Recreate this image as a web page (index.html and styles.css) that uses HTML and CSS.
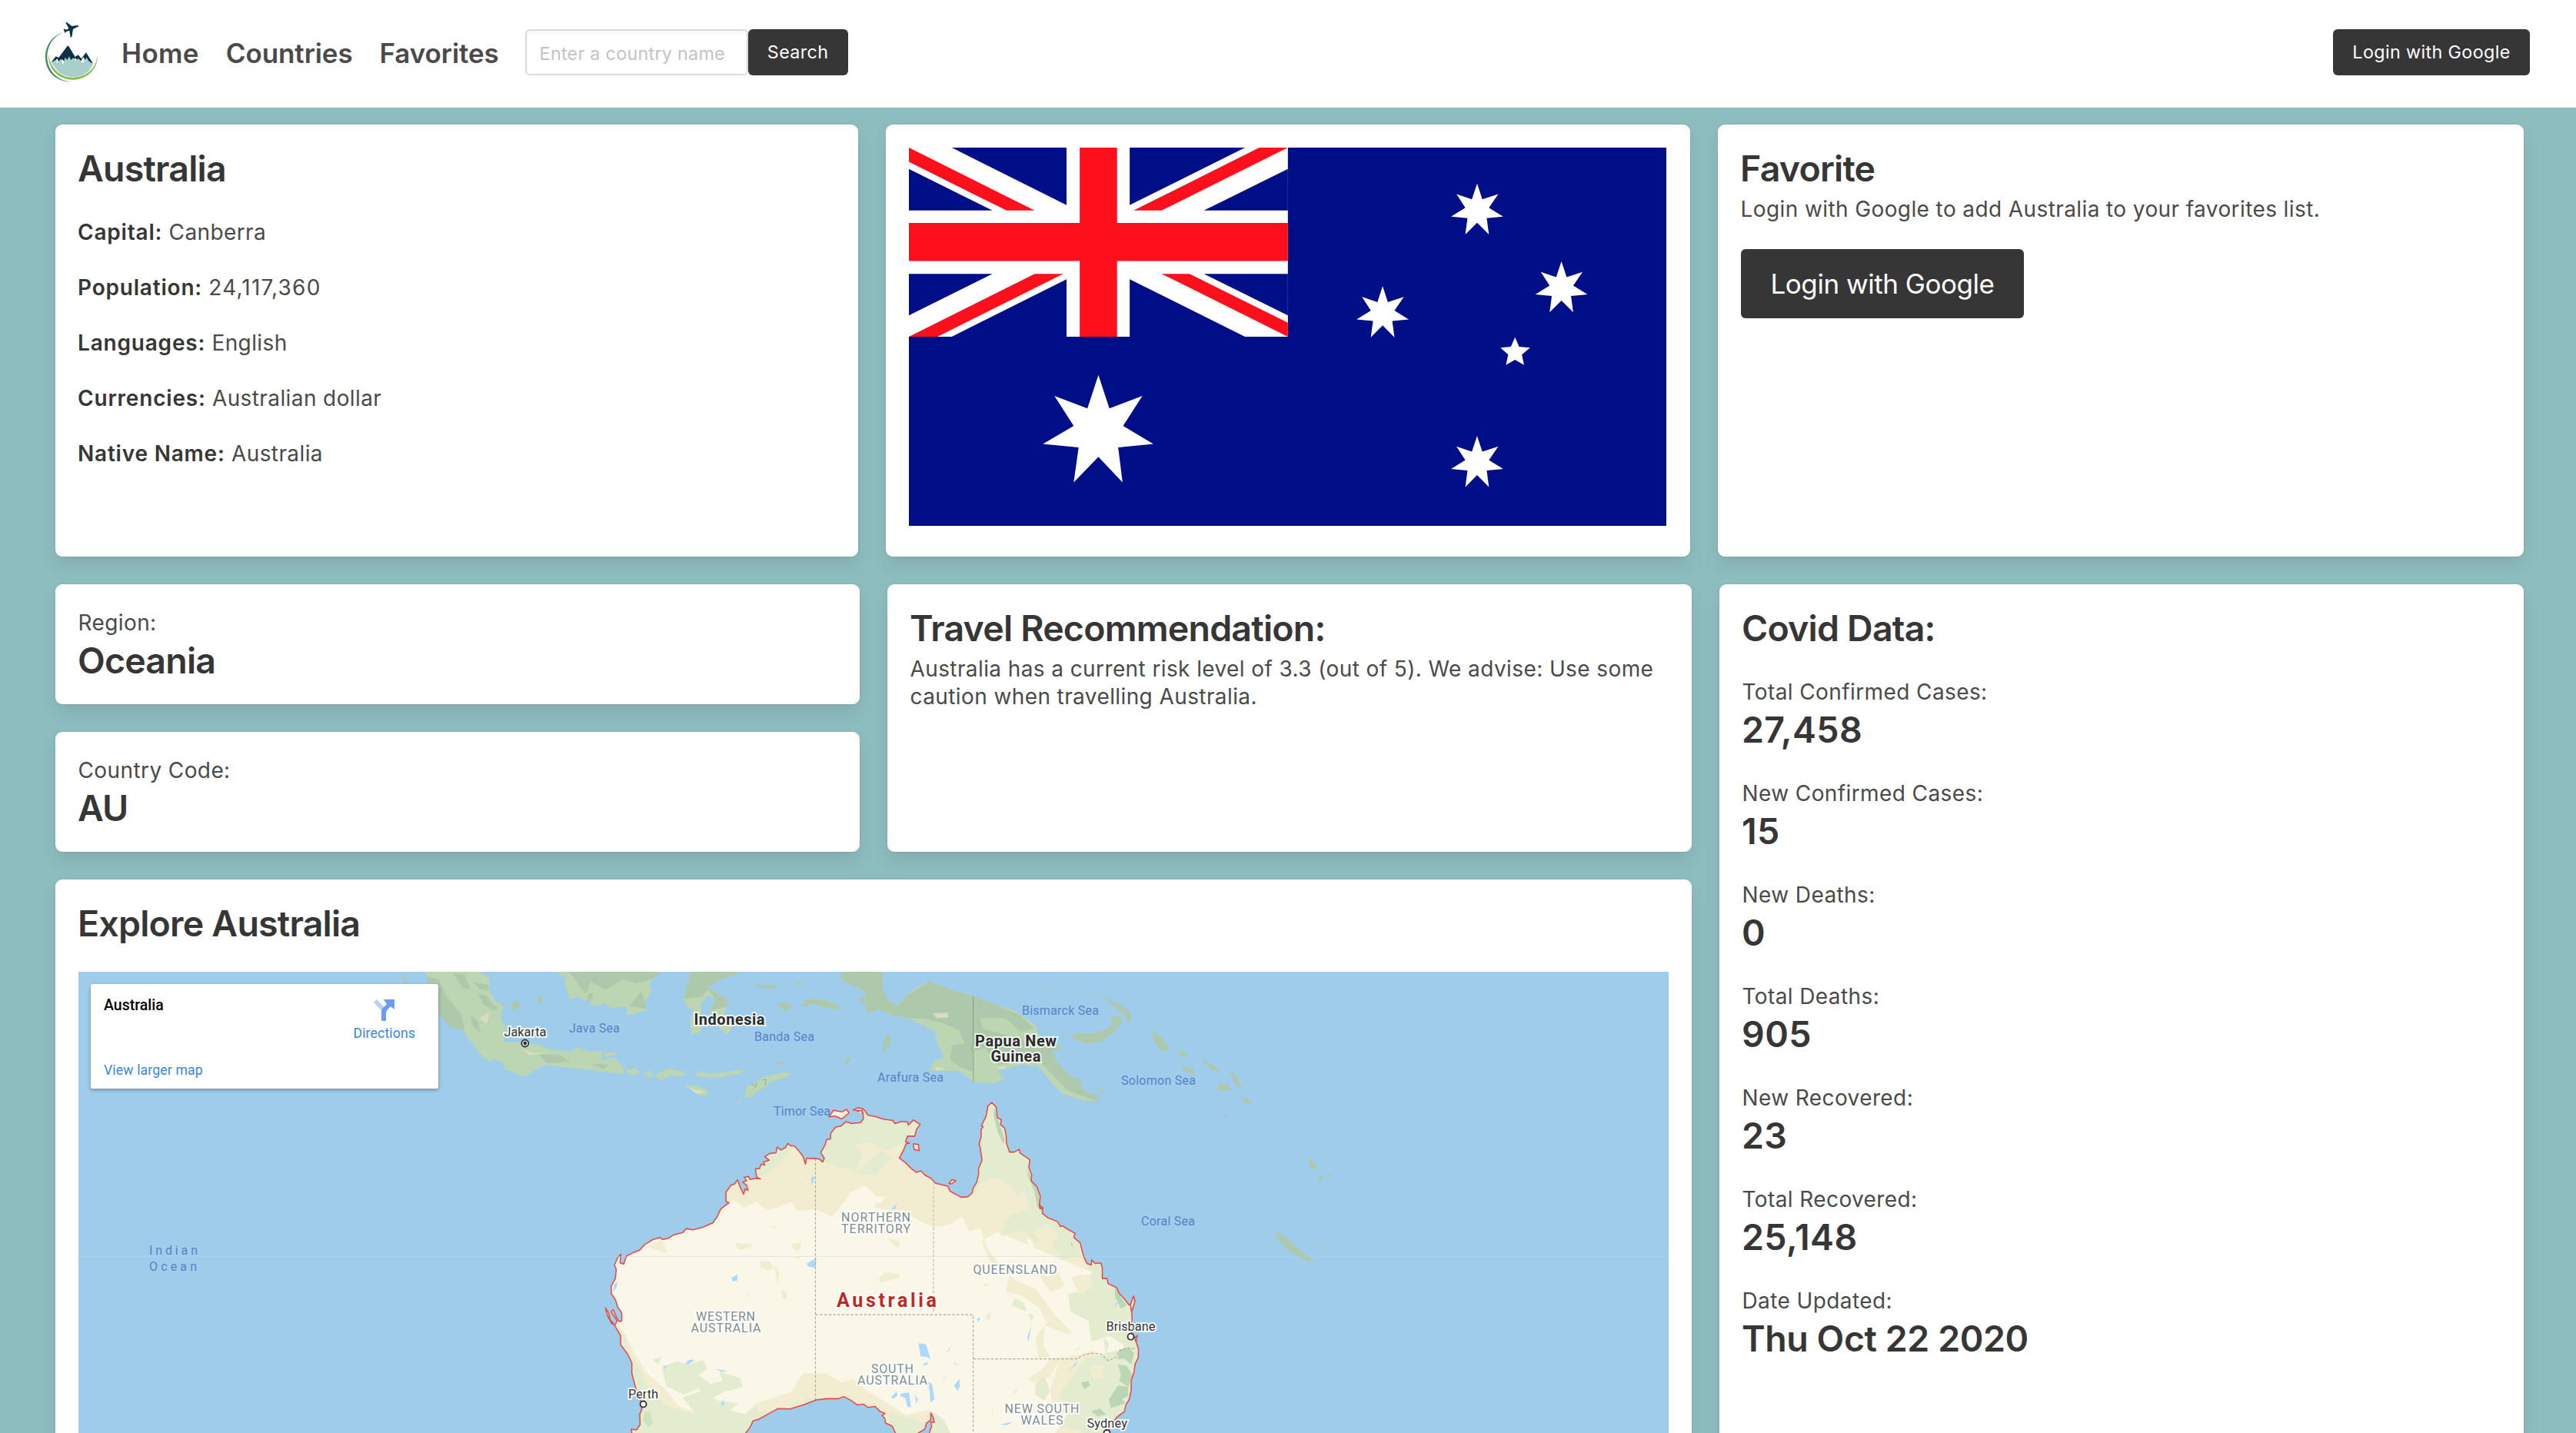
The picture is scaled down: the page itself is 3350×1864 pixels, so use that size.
FILE: index.html
```html
<!DOCTYPE html>
<html lang="en">
<head>
<meta charset="utf-8">
<title>Australia</title>
<link rel="stylesheet" href="styles.css">
</head>
<body>
<header class="navbar">
  <svg class="logo" viewBox="0 0 330 330">
    <path d="M80 213L98 190l11 5 34-46 5 1 25 42 12-8 12 15 19-24 27 43-30-12-8-14-14 24-18-20-12 18-14-16-10 18-16-16-8 20-10-22-12 16z" fill="#0a3145"/>
    <path d="M80 213l18-9 6 12 12-16 10 22 8-28 8 10 8-14 6 14 10-8 8 10 12-8 18 18 14-22 8 14 17 13c-14 32-42 50-78 50s-66-22-85-58z" fill="#a9cfcd"/>
    <path d="M69 180c3 44 38 93 96 93 56 0 92-40 96-92 2 56-38 100-96 100-60 0-100-48-96-101z" fill="#7fbd45"/>
    <path d="M123 98C82 110 56 150 57 196c2 54 40 92 100 94-54-6-90-42-93-94-2-44 22-82 59-98z" fill="#3c8d5a"/>
    <path d="M136 58l5-1 19 15 21-3c6-1 8 3 2 6l-18 8-5 31-5 2-4-27-12 4-6 6-2-7-3-9 5 0 6 3 9-5z" fill="#0a3145"/>
  </svg>
  <nav class="links"><a class="link-home">Home</a><a>Countries</a><a>Favorites</a></nav>
  <form class="search"><input class="input" type="text" placeholder="Enter a country name"><button class="button" type="button">Search</button></form>
  <button class="button login" type="button">Login with Google</button>
</header>

<main class="page">
  <section class="row row-top">
    <article class="box">
      <h2 class="title">Australia</h2>
      <div class="facts">
        <p><strong>Capital:</strong> Canberra</p>
        <p><strong>Population:</strong> <span class="digits">24,117,360</span></p>
        <p><strong>Languages:</strong> English</p>
        <p><strong>Currencies:</strong> Australian dollar</p>
        <p><strong>Native Name:</strong> Australia</p>
      </div>
    </article>
    <article class="box">
      <svg class="flag" viewBox="73 132 1379 1244" preserveAspectRatio="none">
        <defs>
          <path id="star7" d="M1107.500 250L1117 302 1146 285 1129 330 1155 359 1125 364 1129 418 1107.500 379 1086 418 1090 364 1060 359 1086 330 1070 285 1098 302z"/>
        </defs>
        <path d="M73 132h1379v1244H73z" fill="#000f88"/>
        <path d="M73 132h690v622H73z" fill="#fff"/>
        <path d="M151 132H360V321zM475 132H685L475 321zM73 202L225 339H73zM763 202V339H610zM73 547H225L73 684zM610 547H763V684zM360 565V754H151zM475 565L685 754H475z" fill="#000f88"/>
        <path d="M73 380H384V132H452V380H763V505H452V754H384V505H73zM73 132L302 339H251L73 179zM711 132H763L533 339H482zM302 547H354L125 754H73zM533 547H584L763 708V754z" fill="#fd101c"/>
        <g fill="#fff">
          <path d="M418 880L438 990 498 949 463 1047 518 1107 454 1118 462 1233 418 1149 373 1233 382 1118 317 1107 373 1047 338 949 398 990z"/>
          <use href="#star7"/>
          <use href="#star7" x="153.500" y="256"/>
          <use href="#star7" x="-172" y="338"/>
          <use href="#star7" y="830"/>
          <path d="M1176.500 756L1184 787 1204 790 1189 813 1193 847 1176.500 830 1160 847 1164 813 1150 790 1169 787z"/>
        </g>
      </svg>
    </article>
    <article class="box">
      <h2 class="title">Favorite</h2>
      <p class="subtitle">Login with Google to add Australia to your favorites list.</p>
      <button class="button large" type="button">Login with Google</button>
    </article>
  </section>

  <section class="row row-main">
    <div class="left">
      <div class="pair">
        <div class="stack">
          <article class="box"><p class="label">Region:</p><p class="title">Oceania</p></article>
          <article class="box"><p class="label">Country Code:</p><p class="title">AU</p></article>
        </div>
        <article class="box">
          <h2 class="title">Travel Recommendation:</h2>
          <p class="subtitle">Australia has a current risk level of 3.3 (out of 5). We advise: Use some caution when travelling Australia.</p>
        </article>
      </div>
      <article class="box explore">
        <h2 class="title">Explore Australia</h2>
        <div class="map">
          <svg class="map-canvas" viewBox="102 1264 2068 600">
            <defs>
              <path id="land" d="M318 1568L316 1555 334 1558 346 1540 345 1505 352 1490 348 1462 330 1415 318 1370 318 1335 303 1305 280 1275 280 1245 258 1208 243 1190 240 1170 228 1152 236 1180 250 1205 262 1208 268 1195 248 1165 255 1158 264 1180 275 1198 284 1195 283 1168 270 1150 262 1125 248 1105 248 1080 262 1055 265 1025 259 1010 270 985 281 974 278 1003 290 1007 300 980 320 970 345 960 362 942 390 925 415 919 422 925 440 922 460 910 490 903 503 889 525 893 560 884 593 870 608 850 620 824 648 803 638 798 638 768 655 745 668 740 677 727 685 748 698 775 703 757 713 762 708 745 695 735 708 730 700 718 715 716 720 726 738 722 755 724 742 718 738 690 752 690 757 675 770 678 765 668 785 662 770 650 785 640 808 637 812 618 825 628 840 620 848 606 858 614 870 614 890 636 900 650 908 675 912 655 940 656 955 658 967 668 972 655 960 637 975 610 980 593 993 592 994 573 1010 552 1030 548 1045 534 1065 540 1095 537 1105 525 1103 503 1088 497 1070 495 1085 488 1102 490 1112 500 1120 512 1150 518 1170 525 1205 530 1212 540 1235 533 1255 535 1258 545 1275 528 1298 543 1285 560 1280 582 1255 582 1248 600 1262 605 1250 607 1240 632 1227 655 1248 670 1268 690 1285 702 1300 697 1315 712 1335 722 1350 738 1392 748 1400 765 1437 785 1460 783 1475 770 1478 755 1490 735 1497 705 1496 690 1508 662 1502 620 1498 608 1505 585 1505 560 1512 550 1506 548 1522 515 1528 482 1541 470 1556 485 1560 520 1574 528 1571 543 1585 555 1590 580 1591 605 1602 635 1617 635 1635 626 1637 638 1659 652 1671 661 1667 685 1677 712 1675 730 1695 750 1706 782 1703 812 1715 820 1713 838 1732 853 1765 866 1774 882 1782 880 1797 890 1825 905 1820 918 1842 937 1849 965 1855 985 1865 1005 1879 1010 1881 993 1892 1005 1912 1003 1917 1020 1917 1055 1933 1055 1937 1072 1965 1085 1975 1105 1990 1120 2007 1142 2014 1138 2023 1113 2028 1130 2017 1165 2018 1190 2014 1230 2027 1252 2036 1244 2032 1265 2040 1290 2039 1318 2028 1340 2025 1365 2015 1395 2015 1425 2009 1455 1997 1475 1992 1497 1967 1515 1947 1540 1937 1568 1936 1590 1329 1590 1329 1568 1337 1545 1334 1532 1346 1532 1343 1518 1334 1501 1334 1525 1319 1536 1314 1555 1292 1568 1285 1580 1225 1580 1214 1568 1203 1545 1180 1535 1178 1520 1168 1510 1178 1503 1160 1495 1145 1480 1120 1483 1105 1472 1085 1475 1060 1458 1038 1447 1020 1454 980 1454 945 1458 900 1475 855 1488 815 1487 790 1500 750 1522 730 1528 718 1552 705 1568 705 1590 318 1590z"/>
              <clipPath id="coast"><use href="#land"/></clipPath>
            </defs>
            <path d="M102 1264h2068v600H102z" fill="#a0cceb"/>
            <g transform="translate(700 1250) scale(.38265 .39158)">
              <!-- Indonesian and Melanesian islands -->
              <g fill="#bdd6b2">
                <path d="M-390 30L-365 70-355 105-320 160-295 200-260 225-235 260-195 310-160 340-155 300-120 330-115 260-110 220-128 190-118 150-150 130-168 90-165 60-205 30z"/>
                <path d="M65 36L80 55 95 45 90 75 108 128 130 120 180 135 178 152 225 142 250 158 300 150 303 180 370 165 362 140 385 95 378 70 415 36z"/>
                <path d="M515 36L505 90 492 125 508 155 528 160 517 200 520 245 555 235 553 140 575 115 600 125 585 165 610 215 640 245 665 215 630 190 645 130 600 100 570 90 620 60 690 36z"/>
                <path d="M-150 270L-165 320-120 340-110 360-50 385 20 345 140 358 290 376 290 350 255 320 215 330 215 300 165 300 135 285 110 300 40 295 0 278-60 270z"/>
                <path d="M220 305l45-2 5 6-45 10zM298 360l30-2 20 10-20 14-25-10zM360 375l20-12 10 8-8 20zM397 380l20-12 25-10 55 10v15l-45-2-40 15zM532 376l20-10 30 8 50-4 50-8 15 2-10 10-70 12-30 2-50-6zM498 413l40 2 30 10 10 20-25 2-50-28zM700 455l8-35 60-35 70-15 25 2-15 12-50 15-45 30-25 20zM672 476l18-18-4 14z"/>
                <path d="M1022 50L1050 36H1168L1172 95 1190 130 1220 150 1250 115 1280 90 1305 80 1332 67 1400 95 1478 115 1560 148 1610 160 1650 185 1690 215 1700 245 1770 280 1780 290 1745 300 1765 335 1800 375 1850 400 1840 420 1900 450 1903 468 1850 462 1780 440 1745 405 1700 350 1640 345 1560 365 1585 390 1550 408 1478 400 1430 365 1330 365 1345 330 1380 322 1355 270 1350 235 1300 210 1255 190 1200 180 1160 160 1120 175 1110 145 1085 125 1120 120 1100 95 1040 70z"/>
              </g>
              <g fill="#adc8aa">
                <path d="M-380 50l40 10 30 60 50 60 10 50-50-10-60-70zM-290 40l40 5 20 50-30-8zM-220 70l50 10 0 20-30-8zM-230 180l25 20 10 40-28-25zM105 36L160 110 180 70 230 95 290 60 330 75 390 60 415 36zM170 110l15-5-5 25-15 5zM310 150l40-50 20 60zM515 36L505 90 492 125 560 118 575 95 600 125 585 165 645 150 640 125 575 90 620 60 690 36zM0 310l70 0 40 25-80 5zM180 340l60 5-20 15z"/>
                <path d="M1022 50L1050 36H1168L1172 95 1190 130 1220 150 1250 115 1332 67 1400 95 1478 115 1560 148 1640 180 1685 225 1640 235 1590 190 1500 190 1510 225 1640 260 1690 290 1760 275 1780 290 1745 300 1765 335 1800 375 1850 400 1840 420 1900 450 1903 468 1800 430 1740 370 1700 330 1560 345 1520 290 1478 300 1478 370 1430 350 1400 330 1405 280 1450 275 1430 230 1370 205 1300 190 1255 190 1200 180 1160 160 1120 175 1110 145 1085 125 1120 120 1100 95 1040 70z"/>
                <path d="M738 78l70 3-3 12-55-6zM875 65l25 3-5 8-20-2zM810 148l30-12 25 14-25 16zM892 145l25-20 60 5 40 15 10 18-45-8-55-12-20 8zM1170 295l5-35 20-18 2 30-18 25zM1040 345l5-18 18-12-8 22zM800 342l35-8 8 5-35 8zM0 115l15 5-5 20-12-2zM-205 110l30 5 20 30 20 10-15 10-35-20zM-95 140l25-8 10 20-25 12zM-465 36l10 18 20 40 5 30-25-40z"/>
                <path d="M1808 245l35-6 40 2 50-15 18-18-5-22 35-2 3 25-20 15-10 15-45 30-40 6-45-12zM1910 115l45 20 50 28 12 25-10 20-10-25-50-40zM2085 230l30 20 25 30-2 20-25-5-20-30zM2165 292l30 10 15 20-20-4zM2190 350l30 5 15 28-20-10-25-10zM2255 330l40 15 25 25-30-8zM2310 410l30-2 20 20-28 5-25-5zM2350 368l20 10 25 45-25-12zM2385 452l30 8 12 15-25-4zM2325 508l22 10-15 0zM1890 415l20 10 20 20-20-8zM1730 88l28 2-20 4zM1880 107l15 3 0 6zM2618 650l25 25 2 15-20 0zM2650 710l20 12-14 12zM2690 690l2 30-8 0zM2505 902l20 5 60 50 50 38-15 5-60-30-45-40zM2640 925l15 15-12 0zM2725 830l10 8-8 2zM2740 863l5 8zM2675 958l10 6zM2580 472l14-3z"/>
              </g>
              <g fill="#d5debf"><path d="M1340 175l50-3 5 15-40 3zM1350 352l35 5-30 8zM1555 355l30-8 0 14zM-60 290l40 15 60 0-70 8zM-200 190l35-20-10 40zM510 420l60 15-30 8z"/></g>
              <path d="M1478 115V275L1472 292 1479 302V402" fill="none" stroke="#8b9b8b" stroke-width="2.500"/>
              <path d="M723 406l15 12 5-14M760 395l14-2-4 20" fill="none" stroke="#8b9b8b" stroke-width="2"/>
              <!-- Australia -->
              <use href="#land" fill="#faf6e8"/>
              <g clip-path="url(#coast)">
                <path d="M620 850L660 790 700 820 740 800 780 830 860 800 880 830 940 825 1000 850 1040 800 1060 770 1110 745 1160 790 1140 820 1240 835 1290 860 1340 885 1400 875 1440 850 1465 900 1500 885 1530 960 1560 1000 1620 1060 1690 1090 1760 1180 1830 1250 1840 1290 1780 1310 1700 1320 1690 1250 1730 1200 1700 1150 1640 1110 1590 1100 1600 1050 1540 1010 1507 930 1560 900 2040 1100V460H620z" fill="#f2ecd0"/>
                <path d="M740 730L800 690 850 640 870 610 840 590 720 640zM975 670L1080 700 1100 640 1070 610 1130 600 1180 630 1230 610 1260 580 1310 520 1000 470 950 640zM1085 700l80-70 40 20-60 60-60 0zM1350 735l120 50 60-60 40 0 30 60 50-20 20 60-70 20-30 70 80-20 40 40 50 0 40 60 60-20 40 60-20 60-60 10 10 60 60 30 10 70 60-20 50 30-20 70 60 70 0 60 40 40H2060L2040 460H1500L1480 760z" fill="#e3eccf"/>
                <path d="M1500 740l60-20 50 30 30 70-60 10-40 80-80-60zM1680 900l50-30 40 40-40 50zM1700 1040l60-20 30 60-50 20zM1810 1050l60-10 20 40-50 30zM1840 950l30 10-20 30z" fill="#f2ecd0"/>
                <path d="M270 1200L300 1250 330 1310 370 1370 430 1420 480 1480 560 1510 700 1510 740 1470 860 1430 900 1370 980 1370 1030 1400 1070 1390 1120 1430 1190 1470 1250 1510 1330 1490 1370 1568H300L240 1220z" fill="#f2ecd0"/>
                <path d="M280 1225l20 30 5 40 40 60 20 50 50 50 40 60 60 53H300L310 1320zM700 1568l30-60 80-20 80-20 100-15-70 0-90 30-70 25-20 60zM1190 1500l60 15 60 20 30-40 40 30 20 43H1200z" fill="#e3eccf"/>
                <path d="M420 1470L500 1500 560 1510 640 1490 700 1505 740 1480 760 1520 700 1590H400z" fill="#e3eccf"/>
                <path d="M420 1350l50-20 40 10 50-15 15 30-30 20 40 30 40-10-10-30 70 20 10 30-60 15-60 30-30-40-50 20-60-30zM490 1450l60-20 60 30 70 10-60 50-80-10zM388 1325l30-10-10 25z" fill="#e3eccf"/>
                <path d="M1770 1330L1740 1380 1680 1400 1665 1390 1720 1350 1740 1320 1830 1310 1880 1295 1930 1320 2060 1300V1590H1740L1800 1510 1750 1480 1740 1430z" fill="#f2ecd0"/>
                <path d="M1800 1400l60-80 80-20 100-20V1590h-130L1780 1540 1810 1480 1770 1440zM1690 1400l30-20 20 50-20 30-30-20zM1620 1120l30 15 10 30-50-20zM1920 1250l20 20-10 40zM1665 1170l20 10-10 15z" fill="#e3eccf"/>
                <path d="M1840 1400l30-5-15 20zM1870 1350l50-10 0 40-30 10z" fill="#f2ecd0"/>
                <g fill="#b9d7b5">
                  <path d="M1550 490l14 40 10 30 10 30-2 20-20-40-15-60zM1660 690l16 30 20 40 12 50 10 30-22-25-10-50-22-50zM1975 1290l35-5 15 20-10 35-25-20-20 5zM1970 1340l30 5 20 30-15 40-30-20 5-25zM1940 1455l30-45 35 5 0 30-20 10 10 15-50 15zM1880 1495l30-8 20 20-30 5zM1845 1400l25-5 5 15-20 12zM1960 1085l20 30 20 30-20 10-20-40zM1812 930l6 20-8-5z"/>
                  <path d="M360 1500l20-5 10 40-15 18-18-30z" fill="#cfe3c0"/>
                </g>
                <g fill="#f2ecd0">
                  <path d="M370 950l50-25 20 45-30-8zM668 938l60 2-5 12-40 8zM752 1000l30-5 20 25-20 8-25-10zM805 1010l12 20 0 50-10-30zM825 1090l20 10 0 25-15-5zM860 940l35-5-10 30-20-10zM1155 1060l20-25 55 3-5 15-60 15zM1190 920l35 10 5 25-20-10zM780 880l35 3-10 6zM1510 1075l25-5-10 12zM1525 1175l15-8-5 25-15 0zM1540 1495l6-8-2 30zM1740 1385l10-5-2 12zM1610 1435l20-18-5 20zM1375 1385l15-5-10 15zM875 985l15-5-5 12zM705 1105l10 0-4 18z"/>
                  <path d="M1660 920l15 60 15 0-10-50z" fill="#faf6e8"/>
                  <path d="M1720 1210l80 30 40-10 10 40-50 45-60 0-25-40z" fill="#faf6e8"/>
                  <path d="M1060 770l50-25 10 30 60 10-20 20-30-10-50 50-30-20 40-30zM700 820l40-20 20 20 40 10-60 8z" fill="#faf6e8"/>
                </g>
                <g fill="#aadbff">
                  <path d="M912 1005l33-18-2 32-25-4zM657 1052l20-10 0 20-18 2zM928 720l12-6-5 22-8 2zM1200 825l18-20-5 20zM253 1100l5-25 12-12-4 22zM497 1340l15-15 20 0-20 14zM1292 1270l25 3 17 50-12-8-23-2zM1305 1340l22-8-8 12zM1413 1410l18-22 2 25-8 15zM1320 1395l18 10 9 50-14 12-3-40zM1230 1438l30-5 7 50-12-2-8-30-15-5zM1198 1450l20-20 3 12-12 12zM1280 1440l10 15-5 18zM1408 1330l17 12-7-1zM1385 1305l20-30-8 18zM1490 1188l14-3-9 14zM620 1475l10-20 2 18zM425 1345l15 0-10 12zM603 1355l40 8-20 2zM1570 1540l44-10-20 12zM1662 1250l14-40-10 55zM1800 1365l35-40-10 18zM1530 545l20 2zM470 930l8 18zM670 985l8 8zM1095 978l12 12zM1680 860l8-4zM1950 1150l28-25-12 18z"/>
                </g>
              </g>
              <path d="M942 656V1458M942 1175H1478V1590M1478 1322H1832L1850 1310 1880 1303 1910 1304 1937 1328 1965 1315 1972 1297 2000 1285 2032 1288" fill="none" stroke="#a9aaa4" stroke-width="3" stroke-dasharray="9 6"/>
              <path d="M1343 735V1170" fill="none" stroke="#cdccc4" stroke-width="4.500" stroke-dasharray="9 6"/>
              <g fill="none" stroke="#e64a45" stroke-width="4" stroke-linejoin="round">
                <use href="#land"/>
                <path d="M988 518l15-22 30 5 15-8 8 12-25 20-22-10zM1275 607l17 3 3 20-18-4zM1395 740l12-14 12 4-14 10zM2012 1140l4 25M2028 1250l2 15M1703 812l12 10-10 0zM1083 500l18-4 0 10" fill="#faf0dc"/>
              </g>
              <path d="M-1563 982H3842" stroke="#bcd3e6" stroke-width="2" opacity=".6"/>
            </g>
            <g class="sea">
              <text x="740" y="1343" textLength="66">Java Sea</text>
              <text x="981" y="1353.500" textLength="78">Banda Sea</text>
              <text x="1141" y="1407" textLength="86">Arafura Sea</text>
              <text x="1006" y="1451" textLength="74">Timor Sea</text>
              <text x="1329" y="1320" textLength="100">Bismarck Sea</text>
              <text x="1458" y="1411" textLength="97">Solomon Sea</text>
              <text x="1484" y="1594" textLength="70">Coral Sea</text>
              <text x="194" y="1632" textLength="63">Indian</text>
              <text x="194" y="1652.500" textLength="62">Ocean</text>
            </g>
            <g class="country">
              <text x="902.500" y="1332.500" textLength="92">Indonesia</text>
              <text x="1268" y="1361" textLength="106">Papua New</text>
              <text x="1288.500" y="1381" textLength="65">Guinea</text>
            </g>
            <g class="state">
              <text x="1094" y="1589" textLength="90">NORTHERN</text>
              <text x="1094" y="1604" textLength="90">TERRITORY</text>
              <text x="905" y="1718" textLength="77">WESTERN</text>
              <text x="898.500" y="1733" textLength="91">AUSTRALIA</text>
              <text x="1133" y="1786" textLength="55">SOUTH</text>
              <text x="1115" y="1801" textLength="91">AUSTRALIA</text>
              <text x="1265.500" y="1657" textLength="109">QUEENSLAND</text>
              <text x="1306.500" y="1838" textLength="97">NEW SOUTH</text>
              <text x="1327.500" y="1853" textLength="55">WALES</text>
            </g>
            <text class="focus" x="1088" y="1700" textLength="130">Australia</text>
            <g class="city">
              <text x="655.500" y="1347.500" textLength="55">Jakarta</text>
              <text x="817" y="1818.500" textLength="39">Perth</text>
              <text x="1438.500" y="1730.500" textLength="64">Brisbane</text>
              <text x="1413.500" y="1857" textLength="52.500">Sydney</text>
            </g>
            <g fill="#fff" stroke="#333" stroke-width="1.800">
              <circle cx="682.800" cy="1357" r="4.500"/>
              <circle cx="836.600" cy="1826.500" r="4"/>
              <circle cx="1470.500" cy="1738.700" r="4"/>
              <circle cx="1439.500" cy="1864" r="4"/>
              <circle cx="682.800" cy="1357" r="1.500" fill="#222"/>
            </g>
          </svg>
          <div class="map-card">
            <div class="place"><strong class="place-name">Australia</strong><a>View larger map</a></div>
            <div class="directions">
              <svg class="directions-icon" viewBox="0 0 27 28"><path d="M0 4L4 0l9.500 10-3 5z" fill="#b7cffb"/><path d="M10 28V17c0-5 3-7 7-11l-4-6h14v13l-5-4c-4 4-6 6-6 9v10z" fill="#6a9bfa"/></svg>
              <a>Directions</a>
            </div>
          </div>
        </div>
      </article>
    </div>
    <article class="box covid">
      <h2 class="title">Covid Data:</h2>
      <div class="stats">
        <div><p class="label">Total Confirmed Cases:</p><p class="title number">27,458</p></div>
        <div><p class="label">New Confirmed Cases:</p><p class="title number">15</p></div>
        <div><p class="label">New Deaths:</p><p class="title number">0</p></div>
        <div><p class="label">Total Deaths:</p><p class="title number">905</p></div>
        <div><p class="label">New Recovered:</p><p class="title number">23</p></div>
        <div><p class="label">Total Recovered:</p><p class="title number">25,148</p></div>
        <div><p class="label">Date Updated:</p><p class="title date">Thu Oct 22 2020</p></div>
      </div>
    </article>
  </section>
</main>
</body>
</html>
```
FILE: styles.css
```css
* { box-sizing: border-box; margin: 0; padding: 0; }

body {
  height: 1864px;
  overflow: hidden;
  background: #8ebdbf;
  color: #4a4a4a;
  font: 400 28px/36px Inter, "Liberation Sans", sans-serif;
  letter-spacing: .4px;
}

strong { color: #363636; font-weight: 600; letter-spacing: .8px; }

/* Navigation */
.navbar {
  display: flex;
  align-items: flex-start;
  height: 140px;
  padding: 0 60px 0 40px;
  background: #fff;
}
.logo { width: 110px; height: 110px; margin-top: 10px; }
.links {
  display: flex;
  gap: 35px;
  margin: 51px 0 0 8px;
  font-size: 35px;
  font-weight: 600;
  letter-spacing: -.1px;
}
.link-home { letter-spacing: .3px; }
.search { display: flex; margin: 38px 0 0 34px; }
.input {
  width: 290px;
  height: 60px;
  padding: 3px 0 0 17px;
  border: 2px solid #dbdbdb;
  border-radius: 6px;
  background: #fff;
  box-shadow: inset 0 2px 4px rgba(10, 10, 10, .05);
  font: 400 23.300px Inter, "Liberation Sans", sans-serif;
  letter-spacing: .28px;
}
.input::placeholder { color: #c3c3c3; }
.button {
  height: 60px;
  padding: 0 25px 1px;
  border: 0;
  border-radius: 6px;
  background: #363636;
  color: #fff;
  font: 400 23.300px Inter, "Liberation Sans", sans-serif;
  letter-spacing: .38px;
  white-space: nowrap;
}
.search .button { width: 130px; }
.login { width: 256px; margin: 38px 0 0 auto; }
.button.large {
  width: 368px;
  height: 90px;
  margin-top: 34px;
  font-size: 35px;
  letter-spacing: -.46px;
}

/* Cards */
.page { display: flex; flex-direction: column; gap: 36px; padding: 22px 68px 0 72px; }
.row { display: grid; gap: 36px; }
.row-top { grid-template-columns: 1044px 1046px 1048px; height: 562px; }
.row-main { grid-template-columns: 2128px 1046px; height: 1104px; }
.left { display: flex; flex-direction: column; gap: 36px; }
.pair { display: grid; grid-template-columns: 1fr 1fr; gap: 36px; }
.stack { display: flex; flex-direction: column; gap: 36px; }
.box {
  padding: 30px;
  border-radius: 9px;
  background: #fff;
  box-shadow: 0 12px 24px -3px rgba(10, 10, 10, .1), 0 0 0 2px rgba(10, 10, 10, .02);
}
.stack .box { height: 156px; }
.explore, .covid { padding-bottom: 0; border-radius: 9px 9px 0 0; }

.title {
  margin-left: -1px;
  color: #363636;
  font-size: 46.500px;
  font-weight: 600;
  line-height: 54px;
  letter-spacing: -.8px;
}
.number { letter-spacing: .4px; }
.date { letter-spacing: -.44px; }
.subtitle { margin: 8px 0 0 -.500px; }
.label { margin: 0 0 2px -.500px; padding-top: 1px; line-height: 39px; }
.facts { display: flex; flex-direction: column; gap: 36px; margin: 38px 0 0 -1px; }
.digits { letter-spacing: 1.200px; }
.stats { display: flex; flex-direction: column; gap: 36px; margin-top: 36px; }
.flag { display: block; width: 985px; height: 492px; }

/* Map */
.map { position: relative; height: 600px; margin-top: 36px; overflow: hidden; background: #a0cceb; }
.map-canvas { display: block; width: 2068px; height: 600px; font-family: Roboto, sans-serif; letter-spacing: 0; }
.sea { font-size: 16px; fill: #5583c9; }
.country { font-size: 20px; font-weight: 700; fill: #2b2b2b; stroke: rgba(255, 255, 255, .8); stroke-width: 4px; paint-order: stroke; }
.state { font-size: 16px; fill: #7d8c8c; stroke: #fff; stroke-width: 4px; paint-order: stroke; }
.focus { font-size: 25px; font-weight: 700; fill: #c02724; stroke: #fff; stroke-width: 4px; paint-order: stroke; }
.city { font-size: 16.500px; fill: #333; stroke: rgba(255, 255, 255, .85); stroke-width: 4px; paint-order: stroke; }
.map-card {
  position: absolute;
  left: 16px;
  top: 16px;
  display: flex;
  justify-content: space-between;
  width: 452px;
  height: 136px;
  padding: 18px 30px 14px 17px;
  border-radius: 3px;
  background: #fff;
  box-shadow: 0 2px 5px rgba(0, 0, 0, .3);
  font: 400 17.600px/20px Roboto, sans-serif;
  letter-spacing: .15px;
  color: #3a84df;
}
.place { display: flex; flex-direction: column; justify-content: space-between; }
.place-name { color: #000; font-size: 19.500px; font-weight: 500; letter-spacing: 0; }
.directions { display: flex; flex-direction: column; align-items: center; gap: 6px; padding-top: 2px; }
.directions-icon { width: 27px; height: 28px; }
```
